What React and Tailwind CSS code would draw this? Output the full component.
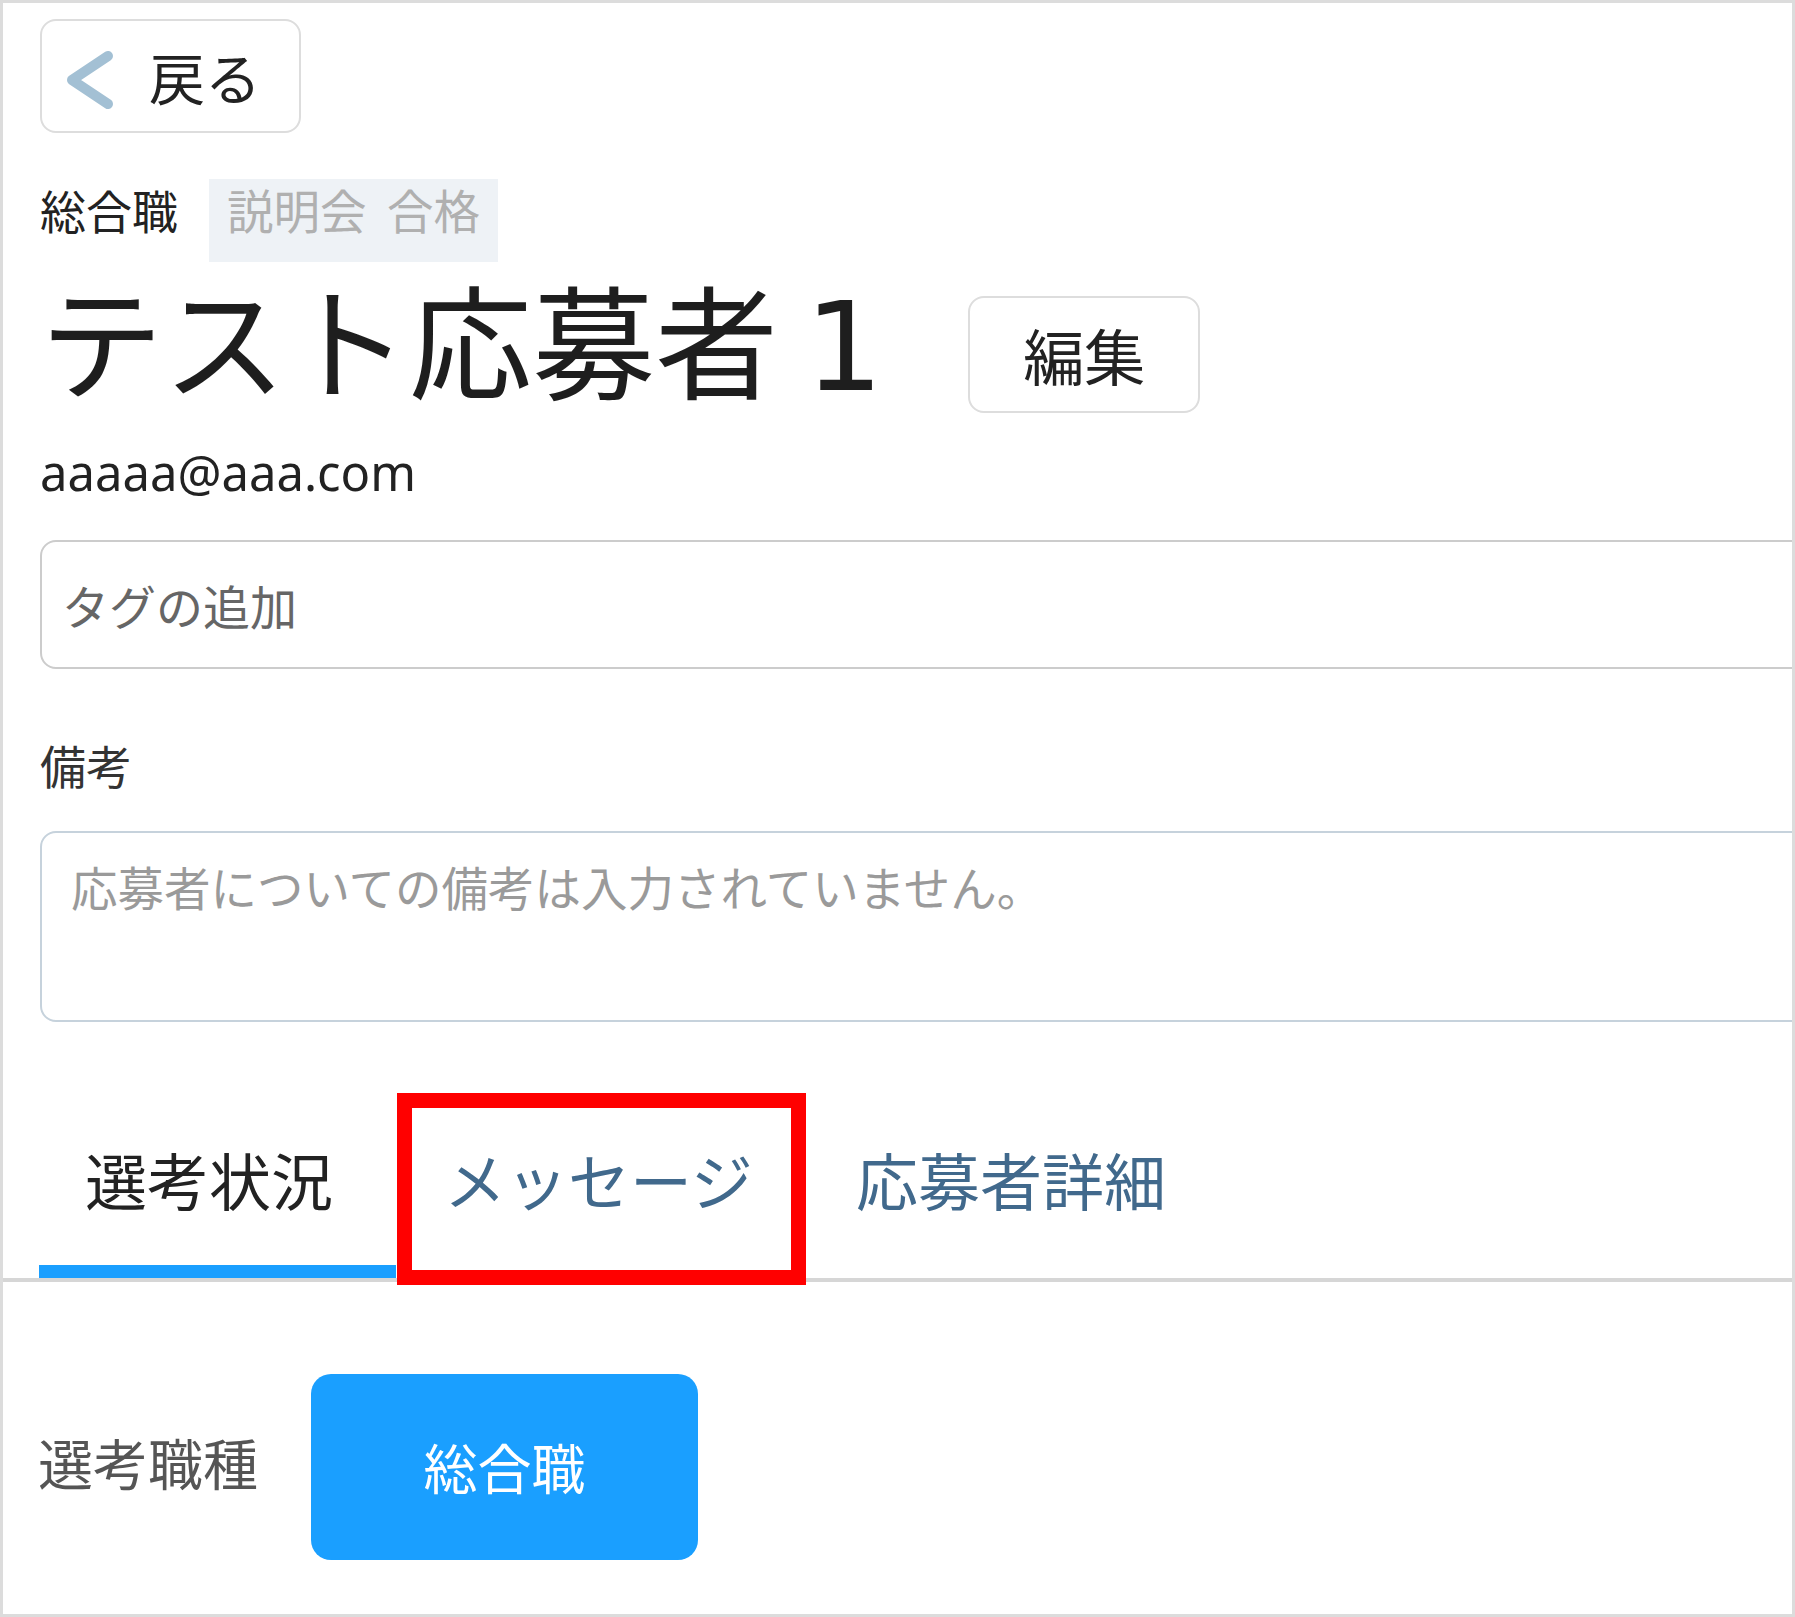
import React from "react";

const JP = { fontFamily: '"Noto Sans CJK JP", "Noto Sans", sans-serif' };

export default function App() {
  return (
    <div
      className="relative w-[1795px] h-[1617px] border-[3px] border-[#dcdcdc] bg-white overflow-hidden text-[#222]"
      style={JP}
    >
      <div className="pl-[37px] pt-[16px]">
        {/* Back button */}
        <button className="flex items-center w-[261px] h-[114px] border-2 border-[#dddddd] rounded-[16px] bg-white pl-[20px]">
          <svg width="56" height="70" viewBox="0 0 56 70" className="shrink-0 mt-[6px]">
            <polyline
              points="46,12 10,36 46,60"
              fill="none"
              stroke="#a3c0d4"
              strokeWidth="10"
              strokeLinecap="round"
              strokeLinejoin="round"
            />
          </svg>
          <span className="ml-[31px] text-[56px] leading-none text-[#222]">戻る</span>
        </button>

        {/* tag row */}
        <div className="flex items-start mt-[46px]">
          <span className="mt-[7px] text-[46px] leading-none text-[#222]">総合職</span>
          <span className="ml-[31px] h-[83px] bg-[#eef2f6] px-[18px] pt-[7px] text-[46.5px] leading-none text-[#b0b0b0] [word-spacing:10px]">
            説明会 合格
          </span>
        </div>

        {/* Title row */}
        <div className="flex items-start mt-[13px]">
          <h1 className="text-[123px] leading-none font-normal text-[#1e1e1e] whitespace-nowrap">
            テスト応募者
            <span
              className="ml-[27px] leading-none"
              style={{ fontFamily: '"DejaVu Sans", sans-serif' }}
            >
              1
            </span>
          </h1>
          <button className="ml-[85px] mt-[21px] w-[232px] h-[117px] border-2 border-[#dddddd] rounded-[16px] bg-white flex items-center justify-center text-[61px] leading-none text-[#222]">
            編集
          </button>
        </div>

        {/* Email */}
        <div
          className="mt-[35px] text-[49px] leading-none text-[#222]"
          style={{ fontFamily: '"Noto Sans", sans-serif' }}
        >
          aaaaa@aaa.com
        </div>

        {/* Tag input */}
        <div className="mt-[43px] w-[1800px] h-[129px] border-2 border-[#cccccc] rounded-[16px] flex items-center pl-[20px]">
          <span className="text-[47px] leading-none text-[#666]">タグの追加</span>
        </div>

        {/* 備考 */}
        <div className="mt-[72px] text-[46px] leading-none text-[#333]">備考</div>

        {/* Textarea */}
        <div className="mt-[44px] w-[1800px] h-[191px] border-2 border-[#c6d2dc] rounded-[16px] pl-[29px] pt-[30px]">
          <span className="text-[46.5px] leading-none text-[#9a9a9a]">
            応募者についての備考は入力されていません。
          </span>
        </div>
      </div>

      {/* Tabs */}
      <div className="mt-[70px] border-b-[4px] border-[#d6d6d6] pl-[36px] flex">
        <div className="w-[357px] pl-[46px] pt-[56px] pb-[55px] border-b-[13px] border-[#1a9fff] text-[62px] leading-none text-[#222] whitespace-nowrap">
          選考状況
        </div>
        <div className="w-[410px] pl-[48px] pt-[56px] pb-[55px] border-b-[13px] border-transparent text-[62px] leading-none text-[#41698c] whitespace-nowrap">
          メッセージ
        </div>
        <div className="pl-[50px] pr-[50px] pt-[56px] pb-[55px] border-b-[13px] border-transparent text-[62px] leading-none text-[#41698c] whitespace-nowrap">
          応募者詳細
        </div>
      </div>

      {/* Bottom row */}
      <div className="mt-[92px] pl-[35px] flex items-center">
        <span className="mb-[12px] text-[55px] leading-none text-[#555]">選考職種</span>
        <button className="ml-[53px] w-[387px] h-[186px] rounded-[20px] bg-[#1a9fff] flex items-center justify-center text-[54px] leading-none text-white">
          総合職
        </button>
      </div>

      {/* red annotation */}
      <div className="absolute left-[394px] top-[1090px] w-[409px] h-[192px] border-[15px] border-[#ff0000] pointer-events-none" />
    </div>
  );
}
